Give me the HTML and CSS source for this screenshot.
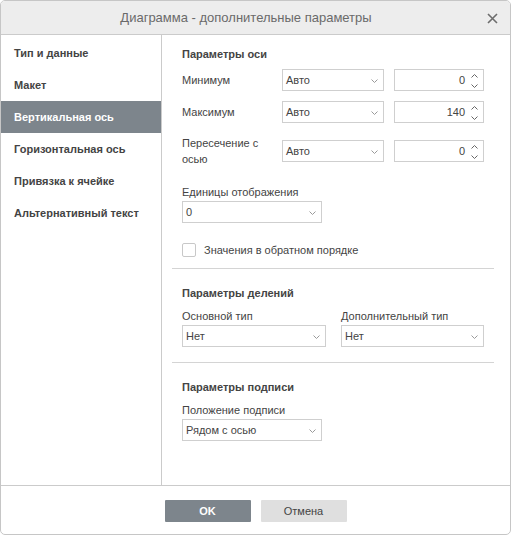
FILE: index.html
```html
<!DOCTYPE html>
<html lang="ru">
<head>
<meta charset="utf-8">
<title>Диаграмма - дополнительные параметры</title>
<link rel="stylesheet" href="styles.css">
</head>
<body>
<div class="dialog">
  <div class="header">
    <span class="title">Диаграмма - дополнительные параметры</span>
    <svg class="close" width="11" height="11" viewBox="0 0 11 11"><path d="M1 1L10 10M10 1L1 10" stroke="#6d6d6d" stroke-width="1.6" fill="none"/></svg>
  </div>
  <div class="body">
    <ul class="nav">
      <li class="nav-item">Тип и данные</li>
      <li class="nav-item">Макет</li>
      <li class="nav-item active">Вертикальная ось</li>
      <li class="nav-item">Горизонтальная ось</li>
      <li class="nav-item">Привязка к ячейке</li>
      <li class="nav-item">Альтернативный текст</li>
    </ul>
    <div class="panel">
      <div class="section s1">
        <div class="heading">Параметры оси</div>
        <div class="row r1">
          <div class="label">Минимум</div>
          <div class="select w101"><span>Авто</span><svg class="chev" width="7" height="4" viewBox="0 0 7 4"><path d="M0.5 0.5L3.5 3.5L6.5 0.5" stroke="#9a9a9a" fill="none"/></svg></div>
          <div class="spin"><span>0</span><span class="arrows"><svg width="7" height="4" viewBox="0 0 7 4"><path d="M0.5 3.5L3.5 0.5L6.5 3.5" stroke="#666" fill="none"/></svg><svg width="7" height="4" viewBox="0 0 7 4"><path d="M0.5 0.5L3.5 3.5L6.5 0.5" stroke="#666" fill="none"/></svg></span></div>
        </div>
        <div class="row r2">
          <div class="label">Максимум</div>
          <div class="select w101"><span>Авто</span><svg class="chev" width="7" height="4" viewBox="0 0 7 4"><path d="M0.5 0.5L3.5 3.5L6.5 0.5" stroke="#9a9a9a" fill="none"/></svg></div>
          <div class="spin"><span>140</span><span class="arrows"><svg width="7" height="4" viewBox="0 0 7 4"><path d="M0.5 3.5L3.5 0.5L6.5 3.5" stroke="#666" fill="none"/></svg><svg width="7" height="4" viewBox="0 0 7 4"><path d="M0.5 0.5L3.5 3.5L6.5 0.5" stroke="#666" fill="none"/></svg></span></div>
        </div>
        <div class="row r3">
          <div class="label two">Пересечение с<br>осью</div>
          <div class="select w101"><span>Авто</span><svg class="chev" width="7" height="4" viewBox="0 0 7 4"><path d="M0.5 0.5L3.5 3.5L6.5 0.5" stroke="#9a9a9a" fill="none"/></svg></div>
          <div class="spin"><span>0</span><span class="arrows"><svg width="7" height="4" viewBox="0 0 7 4"><path d="M0.5 3.5L3.5 0.5L6.5 3.5" stroke="#666" fill="none"/></svg><svg width="7" height="4" viewBox="0 0 7 4"><path d="M0.5 0.5L3.5 3.5L6.5 0.5" stroke="#666" fill="none"/></svg></span></div>
        </div>
        <div class="field units">
          <div class="flabel">Единицы отображения</div>
          <div class="select w140"><span>0</span><svg class="chev" width="7" height="4" viewBox="0 0 7 4"><path d="M0.5 0.5L3.5 3.5L6.5 0.5" stroke="#9a9a9a" fill="none"/></svg></div>
        </div>
        <label class="check">
          <span class="box"></span>
          <span>Значения в обратном порядке</span>
        </label>
      </div>
      <div class="sep"></div>
      <div class="section s2">
        <div class="heading">Параметры делений</div>
        <div class="pair">
          <div class="field">
            <div class="flabel">Основной тип</div>
            <div class="select w144"><span>Нет</span><svg class="chev" width="7" height="4" viewBox="0 0 7 4"><path d="M0.5 0.5L3.5 3.5L6.5 0.5" stroke="#9a9a9a" fill="none"/></svg></div>
          </div>
          <div class="field">
            <div class="flabel">Дополнительный тип</div>
            <div class="select w142"><span>Нет</span><svg class="chev" width="7" height="4" viewBox="0 0 7 4"><path d="M0.5 0.5L3.5 3.5L6.5 0.5" stroke="#9a9a9a" fill="none"/></svg></div>
          </div>
        </div>
      </div>
      <div class="sep sep2"></div>
      <div class="section s3">
        <div class="heading">Параметры подписи</div>
        <div class="field">
          <div class="flabel">Положение подписи</div>
          <div class="select w140"><span>Рядом с осью</span><svg class="chev" width="7" height="4" viewBox="0 0 7 4"><path d="M0.5 0.5L3.5 3.5L6.5 0.5" stroke="#9a9a9a" fill="none"/></svg></div>
        </div>
      </div>
    </div>
  </div>
  <div class="footer">
    <button class="btn primary">OK</button>
    <button class="btn">Отмена</button>
  </div>
</div>
</body>
</html>
```
FILE: styles.css
```css
* { box-sizing: border-box; }
html, body { margin: 0; padding: 0; background: #fff; }
body {
  font-family: "Liberation Sans", Arial, sans-serif;
  font-size: 11px;
  color: #444;
}
.dialog {
  width: 511px;
  height: 535px;
  border: 1px solid #c6c6c6;
  border-radius: 5px;
  display: flex;
  flex-direction: column;
  overflow: hidden;
  background: #fff;
}
.header {
  height: 34px;
  flex: none;
  background: #ededed;
  border-bottom: 1px solid #cbcbcb;
  position: relative;
  display: flex;
  align-items: center;
  justify-content: center;
  padding-right: 19px;
}
.title {
  font-size: 13px;
  color: #6a6a6a;
  line-height: 33px;
}
.close {
  position: absolute;
  right: 12px;
  top: 12px;
}
.body {
  flex: 1;
  display: flex;
  min-height: 0;
}
.nav {
  list-style: none;
  margin: 0;
  padding: 2px 0 0 0;
  width: 161px;
  flex: none;
  border-right: 1px solid #cbcbcb;
}
.nav-item {
  height: 32px;
  line-height: 32px;
  padding-left: 13px;
  font-weight: bold;
  color: #444;
  white-space: nowrap;
}
.nav-item.active {
  background: #7d858c;
  color: #fff;
}
.panel {
  flex: 1;
  padding: 12px 16px 0 10px;
}
.section { padding: 0 0 0 10px; }
.heading {
  font-weight: bold;
  line-height: 14px;
  height: 14px;
  color: #444;
}
.row {
  display: flex;
  align-items: center;
}
.r1 { margin-top: 8px; }
.r2 { margin-top: 10px; }
.r3 { margin-top: 12px; height: 32px; }
.label {
  width: 100px;
  flex: none;
  line-height: 14px;
}
.label.two { line-height: 16px; }
.select {
  height: 22px;
  border: 1px solid #cfcfcf;
  background: #fff;
  display: flex;
  align-items: center;
  justify-content: space-between;
  padding: 0 5px 0 3px;
  flex: none;
}
.chev { margin-top: 1px; }
.w101 { width: 102px; }
.w140 { width: 140px; }
.w144 { width: 144px; }
.w142 { width: 143px; }
.spin {
  margin-left: 10px;
  width: 90px;
  height: 22px;
  border: 1px solid #cfcfcf;
  display: flex;
  align-items: center;
  justify-content: flex-end;
  padding-right: 5px;
}
.arrows {
  display: flex;
  flex-direction: column;
  gap: 6px;
  margin-left: 6px;
  margin-top: 1px;
}
.arrows svg { display: block; }
.field .flabel {
  line-height: 14px;
  height: 14px;
  margin-bottom: 2px;
}
.units { margin-top: 18px; }
.check {
  display: flex;
  align-items: center;
  margin-top: 20px;
  height: 14px;
}
.box {
  width: 14px;
  height: 14px;
  border: 1px solid #c8c8c8;
  border-radius: 2px;
  margin-right: 8px;
  background: #fff;
}
.sep {
  height: 1px;
  background: #d4d4d4;
  margin-top: 11px;
}
.s2 { padding-top: 17px; }
.pair {
  display: flex;
  gap: 15px;
  margin-top: 9px;
}
.sep2 { margin-top: 15px; }
.s3 { padding-top: 17px; }
.s3 .field { margin-top: 9px; }
.footer {
  height: 49px;
  flex: none;
  border-top: 1px solid #cbcbcb;
  display: flex;
  justify-content: center;
  gap: 10px;
  padding-top: 14px;
}
.btn {
  width: 86px;
  height: 22px;
  border: none;
  border-radius: 1px;
  background: #dfdfdf;
  color: #444;
  font-family: "Liberation Sans", Arial, sans-serif;
  font-size: 11px;
  padding: 0;
}
.btn.primary {
  background: #7d858c;
  color: #fff;
  font-weight: bold;
}
```
